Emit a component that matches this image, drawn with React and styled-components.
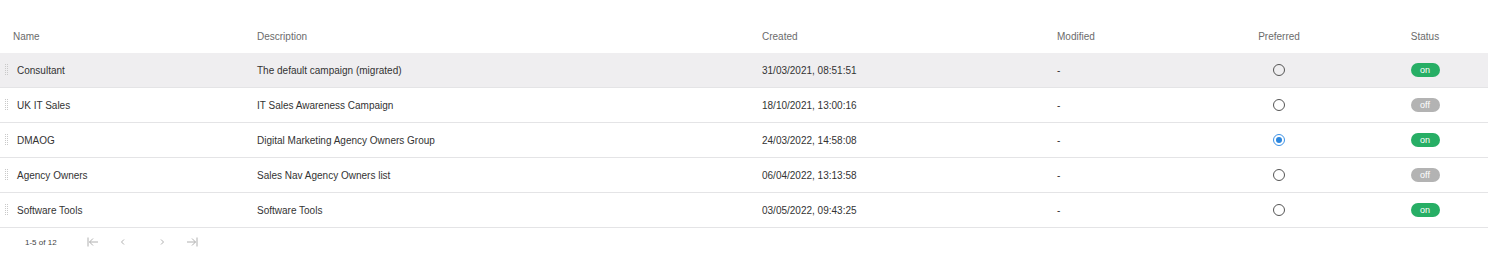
import React from "react";
import styled, { createGlobalStyle } from "styled-components";

const Global = createGlobalStyle`
  html, body { margin: 0; padding: 0; background: #fff; }
  body { font-family: "Liberation Sans", Arial, Helvetica, sans-serif; -webkit-font-smoothing: antialiased; }
`;

const Table = styled.div`
  width: 1488px;
  margin-top: 19px;
`;

const cols = "244px 505px 295px 152px 166px 126px";

const HeaderRow = styled.div`
  display: grid;
  grid-template-columns: ${cols};
  height: 34px;
  align-items: center;
`;

const HeadCell = styled.div`
  font-size: 10px;
  color: #6b6b6b;
  padding-left: ${(p) => (p.$center ? "0" : "13px")};
  text-align: ${(p) => (p.$center ? "center" : "left")};
`;

const Row = styled.div`
  display: grid;
  grid-template-columns: ${cols};
  height: 34px;
  align-items: center;
  background: ${(p) => (p.$active ? "#efeef0" : "#fff")};
  border-bottom: 1px solid #e4e4e6;
`;

const Cell = styled.div`
  font-size: 10px;
  color: #333;
  padding-left: 13px;
  white-space: nowrap;
`;

const NameCell = styled.div`
  display: flex;
  align-items: center;
  gap: 9px;
  padding-left: 5px;
  font-size: 10px;
  color: #333;
`;

const HandleSvg = styled.svg`
  flex: none;
  display: block;
`;

const Handle = () => (
  <HandleSvg width="3" height="12" viewBox="0 0 3 12">
    {[0, 2, 4, 6, 8, 10].map((y) => (
      <g key={y} fill="#c9c9c9">
        <rect x="0" y={y} width="1" height="1" />
        <rect x="2" y={y} width="1" height="1" />
      </g>
    ))}
  </HandleSvg>
);

const CenterCell = styled.div`
  display: flex;
  justify-content: center;
  align-items: center;
`;

const Radio = styled.span`
  width: 10px;
  height: 10px;
  border-radius: 50%;
  border: 1px solid ${(p) => (p.$checked ? "#3d92e6" : "#555")};
  display: flex;
  align-items: center;
  justify-content: center;
  box-sizing: content-box;
  &::after {
    content: "";
    width: 6px;
    height: 6px;
    border-radius: 50%;
    background: ${(p) => (p.$checked ? "#2b86de" : "transparent")};
  }
`;

const Pill = styled.span`
  width: 29px;
  height: 14px;
  border-radius: 7px;
  background: ${(p) => (p.$on ? "#27ae65" : "#b3b3b3")};
  color: #fff;
  font-size: 9px;
  line-height: 14px;
  text-align: center;
`;

const Footer = styled.div`
  display: flex;
  align-items: center;
  height: 28px;
  padding-left: 25px;
`;

const Count = styled.span`
  font-size: 8px;
  color: #444;
  width: 62px;
`;

const PageBtn = styled.span`
  width: ${(p) => p.$w || 30}px;
  display: flex;
  align-items: center;
  color: #b0b0b0;
`;

const rows = [
  { name: "Consultant", desc: "The default campaign (migrated)", created: "31/03/2021, 08:51:51", pref: false, on: true, active: true },
  { name: "UK IT Sales", desc: "IT Sales Awareness Campaign", created: "18/10/2021, 13:00:16", pref: false, on: false },
  { name: "DMAOG", desc: "Digital Marketing Agency Owners Group", created: "24/03/2022, 14:58:08", pref: true, on: true },
  { name: "Agency Owners", desc: "Sales Nav Agency Owners list", created: "06/04/2022, 13:13:58", pref: false, on: false },
  { name: "Software Tools", desc: "Software Tools", created: "03/05/2022, 09:43:25", pref: false, on: true },
];

const Icon = ({ d, bar }) => (
  <svg width="12" height="12" viewBox="0 0 12 12" fill="none" stroke="currentColor" strokeWidth="1">
    <path d={d} />
    {bar && <path d={bar} />}
  </svg>
);

export default function App() {
  return (
    <>
      <Global />
      <Table>
        <HeaderRow>
          <HeadCell>Name</HeadCell>
          <HeadCell>Description</HeadCell>
          <HeadCell>Created</HeadCell>
          <HeadCell>Modified</HeadCell>
          <HeadCell $center>Preferred</HeadCell>
          <HeadCell $center>Status</HeadCell>
        </HeaderRow>
        {rows.map((r) => (
          <Row key={r.name} $active={r.active}>
            <NameCell>
              <Handle />
              {r.name}
            </NameCell>
            <Cell>{r.desc}</Cell>
            <Cell>{r.created}</Cell>
            <Cell>-</Cell>
            <CenterCell>
              <Radio $checked={r.pref} />
            </CenterCell>
            <CenterCell>
              <Pill $on={r.on}>{r.on ? "on" : "off"}</Pill>
            </CenterCell>
          </Row>
        ))}
        <Footer>
          <Count>1-5 of 12</Count>
          <PageBtn $w={30}>
            <Icon d="M11 6H2.5M6 2.5L2.5 6L6 9.5" bar="M1 1.5V10.5" />
          </PageBtn>
          <PageBtn $w={39}>
            <Icon d="M7 3.5L4.5 6L7 8.5" />
          </PageBtn>
          <PageBtn $w={30}>
            <Icon d="M5 3.5L7.5 6L5 8.5" />
          </PageBtn>
          <PageBtn $w={30}>
            <Icon d="M1 6H9.5M6 2.5L9.5 6L6 9.5" bar="M11 1.5V10.5" />
          </PageBtn>
        </Footer>
      </Table>
    </>
  );
}
